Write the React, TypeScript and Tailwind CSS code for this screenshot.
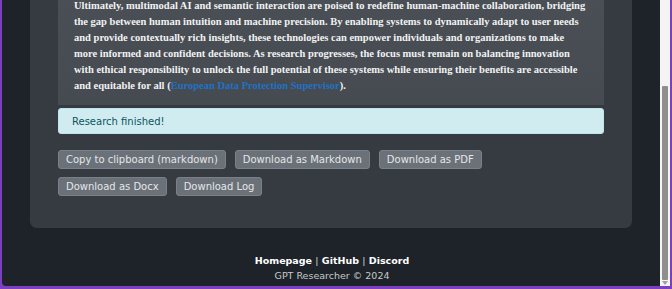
export default function App() {
  const buttonClass =
    "rounded-[3px] border border-[#7a8087] bg-[#6b7178] px-[7px] h-[19px] text-[10px] leading-none text-[#e4e6e8]";

  return (
    <div className="flex h-[289px] w-[672px] overflow-hidden border-b-[3px] border-l-2 border-r-2 border-[#7b3fc2] bg-[#7b3fc2] font-['DejaVu_Sans',sans-serif]">
      <div className="flex min-w-0 flex-1 flex-col rounded-bl-[4px] bg-[#1e2329]">
        <div className="mx-[28px] min-w-0 rounded-b-[7px] bg-[#363b41] px-[28px] pb-[32px]">
          <div className="overflow-hidden bg-gradient-to-b from-[#4a4f55] to-[#464b51] px-[16px] pb-[11px]">
            <p className="-mt-[2px] whitespace-nowrap font-['Liberation_Serif',serif] text-[10.5px] font-bold leading-[16px] text-[#f1f2f3]">
              Ultimately, multimodal AI and semantic interaction are poised to redefine human-machine collaboration, bridging
              <br />
              the gap between human intuition and machine precision. By enabling systems to dynamically adapt to user needs
              <br />
              and provide contextually rich insights, these technologies can empower individuals and organizations to make
              <br />
              more informed and confident decisions. As research progresses, the focus must remain on balancing innovation
              <br />
              with ethical responsibility to unlock the full potential of these systems while ensuring their benefits are accessible
              <br />
              and equitable for all (<a className="text-[#1e72c9]">European Data Protection Supervisor</a>).
            </p>
          </div>
          <div className="mt-[3px] flex h-[26px] items-center rounded-[3px] border border-[#bee5eb] bg-[#d1ecf1] px-[13px] text-[10px] text-[#0c5460]">
            Research finished!
          </div>
          <div className="mt-[16px] flex flex-wrap gap-x-[9px] gap-y-[8px]">
            <button className={buttonClass}>Copy to clipboard (markdown)</button>
            <button className={buttonClass}>Download as Markdown</button>
            <button className={buttonClass}>Download as PDF</button>
          </div>
          <div className="mt-[8px] flex gap-[9px]">
            <button className={buttonClass}>Download as Docx</button>
            <button className={buttonClass}>Download Log</button>
          </div>
        </div>
        <div className="mt-[25px] flex flex-col items-center pl-[2px] text-[9.5px] leading-[15px]">
          <p className="font-bold text-white">
            Homepage <span className="font-normal text-[#cfd2d5]">|</span> GitHub{" "}
            <span className="font-normal text-[#cfd2d5]">|</span> Discord
          </p>
          <p className="text-[#c6c9cc]">GPT Researcher © 2024</p>
        </div>
      </div>
      <div className="relative w-[10px] bg-[#f4f4f4]">
        <div className="absolute left-[2px] top-[86px] h-[194px] w-[6px] rounded-[1px] bg-[#8e8e8e]" />
        <div className="absolute bottom-[1px] left-[2px] h-0 w-0 border-l-[3px] border-r-[3px] border-t-[4px] border-l-transparent border-r-transparent border-t-[#a0a0a0]" />
      </div>
    </div>
  );
}
